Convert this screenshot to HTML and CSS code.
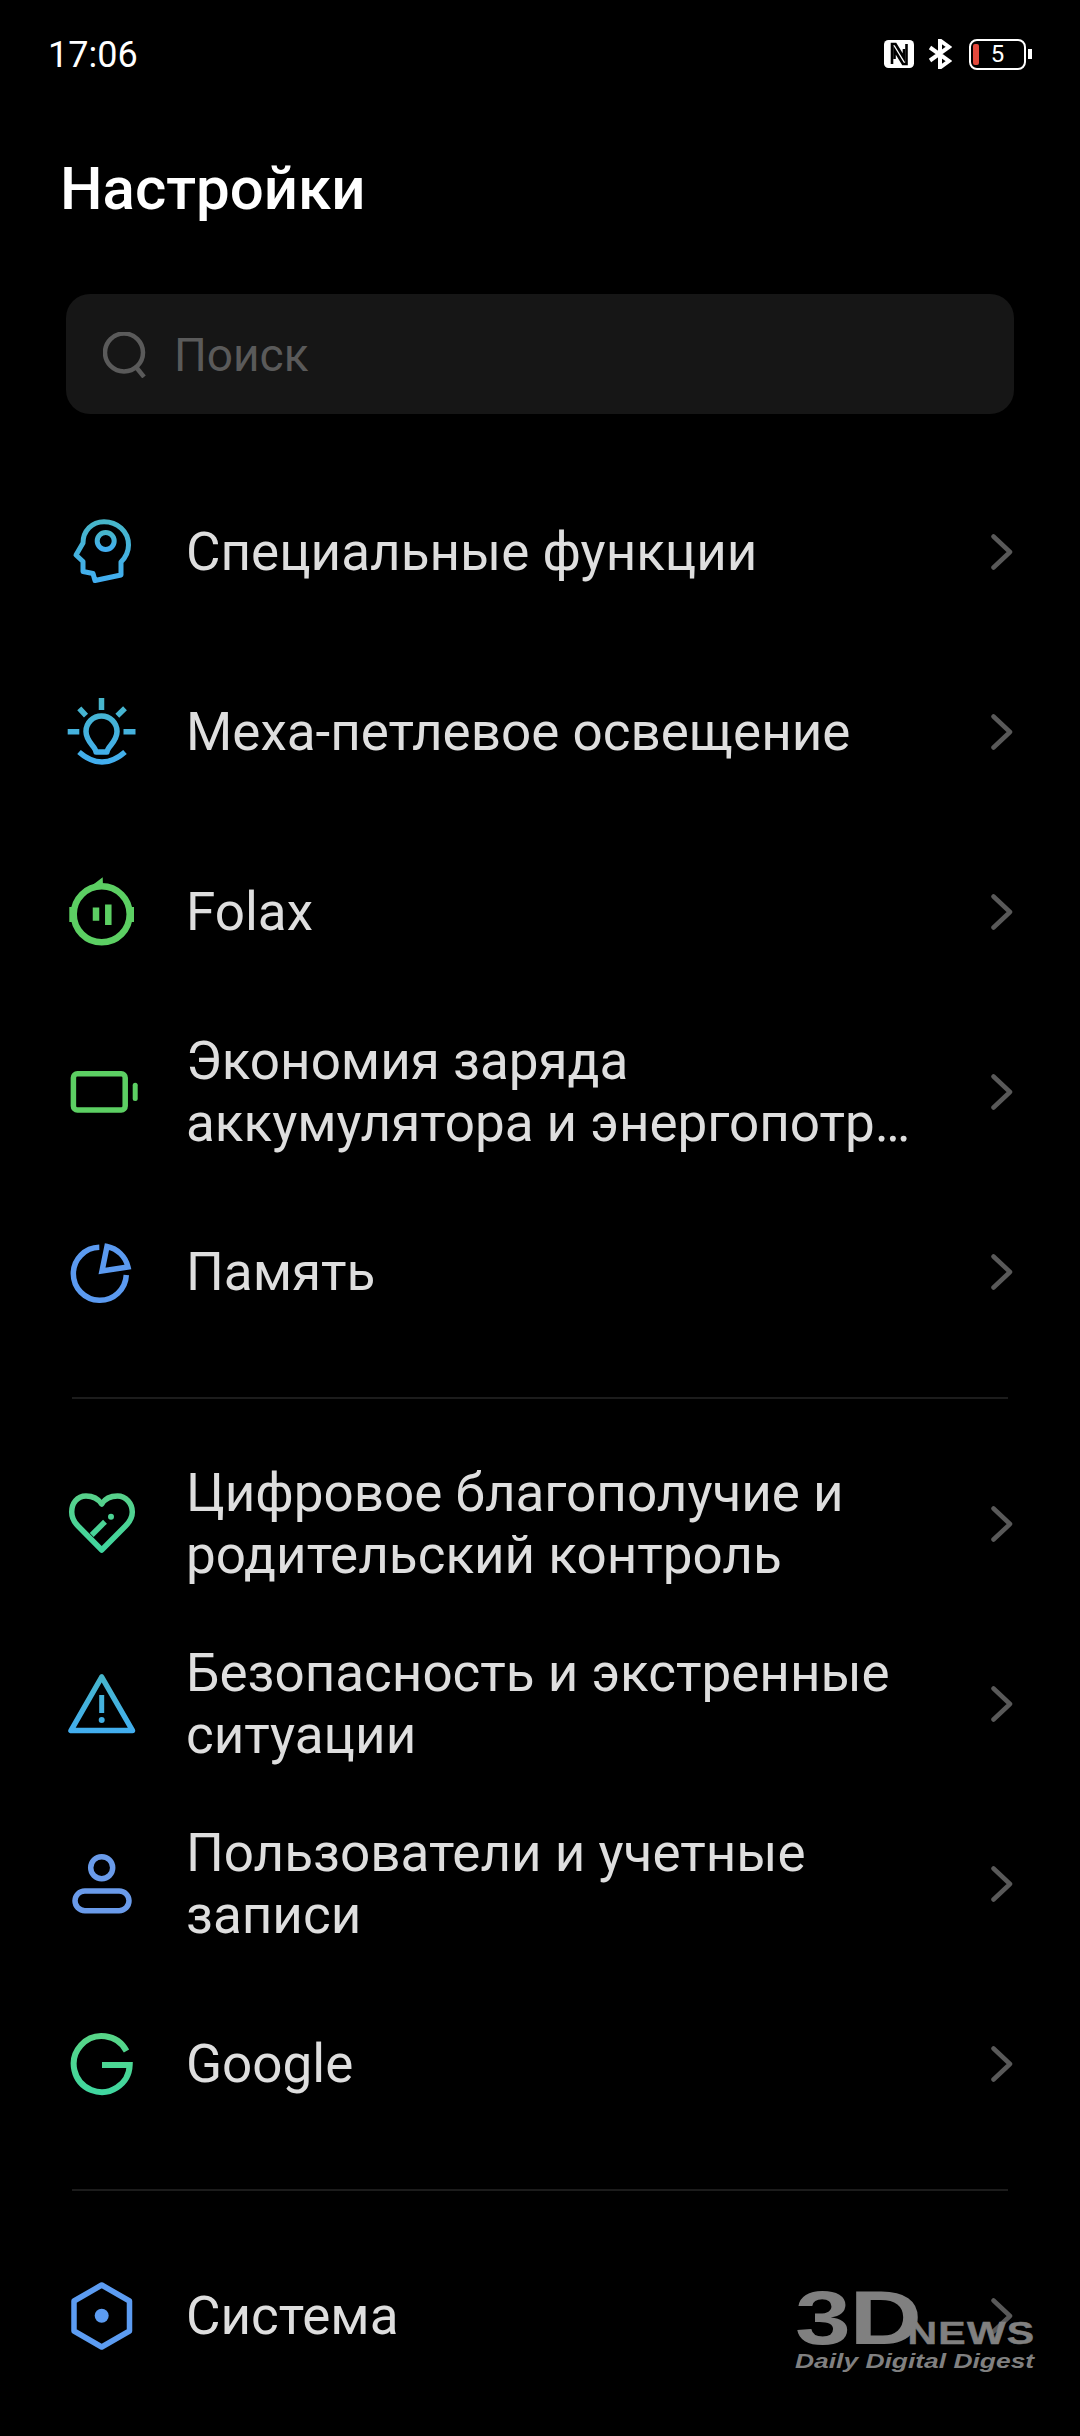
FILE: index.html
```html
<!doctype html>
<html lang="ru">
<head>
	<meta charset="UTF-8">
	<title>Настройки</title>
	<link rel="stylesheet" href="styles.css">
</head>
<body>
	<div class="page">
		<div class="status">
			<span class="time">17:06</span>
			<div class="status-icons">
				<svg class="nfc" viewBox="0 0 30 28"><rect width="30" height="28" rx="4.500" fill="#fff"/><path d="M8 24V4h3.500L20 18V9" fill="none" stroke="#000" stroke-width="2.600"/><path d="M22.500 4v20H19L10.500 10v9" fill="none" stroke="#000" stroke-width="2.600"/></svg>
				<svg class="bt" viewBox="0 0 24 30"><path d="M2 8.500L21 22L12 28.500V1.500L21 8L2 21.500" fill="none" stroke="#fff" stroke-width="4"/></svg>
				<div class="batt"><i class="batt-low"></i><span>5</span></div>
				<i class="batt-nub"></i>
			</div>
		</div>

		<h1 class="title">Настройки</h1>

		<div class="search">
			<svg class="search-icon" viewBox="0 0 44 46"><circle cx="21" cy="20.500" r="19" fill="none" stroke="#5a5a5a" stroke-width="4.500"/><path d="M33 35l8 10" stroke="#5a5a5a" stroke-width="4.500" fill="none"/></svg>
			<span>Поиск</span>
		</div>

		<ul class="list">
			<li class="row">
				<svg class="ico" viewBox="0 0 72 72"><defs><linearGradient id="g1" x1="0" y1="0" x2="0" y2="1"><stop offset="0" stop-color="#47b6c9"/><stop offset="1" stop-color="#42aef0"/></linearGradient></defs><g fill="none" stroke="url(#g1)" stroke-width="5" stroke-linejoin="round"><path d="M55 59V46C59 42 62.500 36 62.500 29C62.500 15 51 5.700 38 5.700C26 5.700 17 15 17 27L10 39L17 45.500V55.500L27 57.500L29 64.500Z"/><circle cx="39.700" cy="25" r="8.500"/></g></svg>
				<span class="label">Специальные функции</span>
				<svg class="arrow" viewBox="0 0 24 36"><path d="M3.500 2.500L20 18L3.500 33.500"/></svg>
			</li>
			<li class="row">
				<svg class="ico" viewBox="0 0 72 72"><defs><linearGradient id="g2" gradientUnits="userSpaceOnUse" x1="0" y1="2" x2="0" y2="68"><stop offset="0" stop-color="#47b6c9"/><stop offset="1" stop-color="#42aef0"/></linearGradient></defs><g fill="none" stroke="url(#g2)" stroke-width="5.500"><path d="M35.500 2v12M1.700 35.700h11.600M57.500 35.700h12M13.300 12.300l6.700 7.400M59 12.300l-7.700 7.400"/><path d="M30 56H41C41.500 50 51 46 51 35.500A15.500 15.500 0 0 0 20 35.500C20 46 29.500 50 30 56Z" stroke-linejoin="round"/><path d="M13 56Q36 76 59 56"/></g></svg>
				<span class="label">Меха-петлевое освещение</span>
				<svg class="arrow" viewBox="0 0 24 36"><path d="M3.500 2.500L20 18L3.500 33.500"/></svg>
			</li>
			<li class="row">
				<svg class="ico" viewBox="0 0 72 72"><g fill="none" stroke="#5ccf63" stroke-width="6.500"><circle cx="35.700" cy="38.300" r="28"/><path d="M30 31.500v13.200M42.300 28.500V49"/></g><path d="M36.700 1.300L24 11h13zM3.300 31h5v15h-5zM63 31h5v15h-5z" fill="#5ccf63"/></svg>
				<span class="label">Folax</span>
				<svg class="arrow" viewBox="0 0 24 36"><path d="M3.500 2.500L20 18L3.500 33.500"/></svg>
			</li>
			<li class="row">
				<svg class="ico" viewBox="0 0 72 72"><rect x="7.400" y="17.800" width="51.800" height="36.200" rx="4" fill="none" stroke="#5ccf63" stroke-width="5.500"/><rect x="66.700" y="26.700" width="5" height="18.300" rx="2.500" fill="#5ccf63"/></svg>
				<span class="label two">Экономия заряда<br>аккумулятора и энергопотр…</span>
				<svg class="arrow" viewBox="0 0 24 36"><path d="M3.500 2.500L20 18L3.500 33.500"/></svg>
			</li>
			<li class="row">
				<svg class="ico" viewBox="0 0 72 72"><g fill="none" stroke="#5b9af0" stroke-width="5.500"><path d="M33.300 11.300A26.500 26.500 0 1 0 60.300 39"/><path d="M36 35L41 10.500A27 27 0 0 1 62 31Z"/></g></svg>
				<span class="label">Память</span>
				<svg class="arrow" viewBox="0 0 24 36"><path d="M3.500 2.500L20 18L3.500 33.500"/></svg>
			</li>
		</ul>

		<div class="line"></div>

		<ul class="list">
			<li class="row">
				<svg class="ico" viewBox="0 0 72 72"><defs><linearGradient id="g3" gradientUnits="userSpaceOnUse" x1="0" y1="6" x2="0" y2="65"><stop offset="0" stop-color="#58d08a"/><stop offset="1" stop-color="#3fd6a0"/></linearGradient></defs><g fill="none" stroke="url(#g3)" stroke-width="5.500" stroke-linejoin="round"><path d="M35.700 16C31 9 24 8 20 8C11 8 5.700 15.500 5.700 24C5.700 31 9 35 12 38L35.700 62L59.500 38C62.500 35 66.300 31 66.300 24C66.300 15.500 60 8 51.500 8C47 8 40 9 35.700 16Z"/><path d="M25.700 47L39 33.700"/></g><circle cx="45" cy="28.700" r="3" fill="#4cd394"/></svg>
				<span class="label two">Цифровое благополучие и<br>родительский контроль</span>
				<svg class="arrow" viewBox="0 0 24 36"><path d="M3.500 2.500L20 18L3.500 33.500"/></svg>
			</li>
			<li class="row">
				<svg class="ico" viewBox="0 0 72 72"><defs><linearGradient id="g4" gradientUnits="userSpaceOnUse" x1="0" y1="5" x2="0" y2="65"><stop offset="0" stop-color="#47b6c9"/><stop offset="1" stop-color="#42aef0"/></linearGradient></defs><path d="M35.700 9L5 62.500H66.500Z" fill="none" stroke="url(#g4)" stroke-width="5.500" stroke-linejoin="round"/><path d="M35.700 27v18" stroke="url(#g4)" stroke-width="5"/><circle cx="35.700" cy="52" r="3" fill="#42aee4"/></svg>
				<span class="label two">Безопасность и экстренные<br>ситуации</span>
				<svg class="arrow" viewBox="0 0 24 36"><path d="M3.500 2.500L20 18L3.500 33.500"/></svg>
			</li>
			<li class="row">
				<svg class="ico" viewBox="0 0 72 72"><g fill="none" stroke="#6a9bea" stroke-width="5.500"><circle cx="35.700" cy="19.700" r="11"/><rect x="9" y="43" width="54" height="19.700" rx="9.850"/></g></svg>
				<span class="label two">Пользователи и учетные<br>записи</span>
				<svg class="arrow" viewBox="0 0 24 36"><path d="M3.500 2.500L20 18L3.500 33.500"/></svg>
			</li>
			<li class="row">
				<svg class="ico" viewBox="0 0 72 72"><defs><linearGradient id="g5" gradientUnits="userSpaceOnUse" x1="0" y1="5" x2="0" y2="67"><stop offset="0" stop-color="#58d586"/><stop offset="1" stop-color="#3fd6a0"/></linearGradient></defs><path d="M60.500 23A28 28 0 1 0 63.700 37H36" fill="none" stroke="url(#g5)" stroke-width="6"/></svg>
				<span class="label">Google</span>
				<svg class="arrow" viewBox="0 0 24 36"><path d="M3.500 2.500L20 18L3.500 33.500"/></svg>
			</li>
		</ul>

		<div class="line"></div>

		<ul class="list">
			<li class="row">
				<svg class="ico" viewBox="0 0 72 72"><path d="M35.700 5L63.500 21V51L35.700 67L8 51V21Z" fill="none" stroke="#5c9cf2" stroke-width="5.500" stroke-linejoin="round"/><circle cx="35.700" cy="35.700" r="7" fill="#5c9cf2"/></svg>
				<span class="label">Система</span>
				<svg class="arrow" viewBox="0 0 24 36"><path d="M3.500 2.500L20 18L3.500 33.500"/></svg>
			</li>
		</ul>

		<div class="mark">
			<div class="mark-top"><span class="mark-3d">3D</span><span class="mark-news">NEWS</span></div>
			<div class="mark-sub">Daily Digital Digest</div>
		</div>
	</div>
</body>
</html>
```

FILE: styles.css
```css
*{
	margin:0;
	padding:0;
	box-sizing:border-box;
}
html,body{
	background:#000;
	height:2436px;
	overflow:hidden;
}
body{
	font-family:Roboto,"Noto Sans",sans-serif;
	color:#dedede;
}
li{
	list-style:none;
}
.page{
	position:relative;
	width:1080px;
	height:2436px;
}

/* status bar */
.status{
	display:flex;
	justify-content:space-between;
	align-items:center;
	height:110px;
	padding:0 48px;
	color:#fff;
}
.time{
	font-size:36px;
}
.status-icons{
	display:flex;
	align-items:center;
	margin-bottom:2px;
}
.nfc{
	width:30px;
	height:28px;
	margin-right:14px;
}
.bt{
	width:24px;
	height:30px;
	margin-right:17px;
}
.batt{
	position:relative;
	display:flex;
	align-items:center;
	justify-content:center;
	width:57px;
	height:31px;
	border:2px solid #fff;
	border-radius:8px;
	font-size:24px;
}
.batt-low{
	position:absolute;
	left:2px;
	top:3px;
	width:6px;
	height:21px;
	background:#e2483c;
	border-radius:2px;
}
.batt-nub{
	width:4px;
	height:10px;
	margin-left:2px;
	background:#fff;
}

/* title and search */
.title{
	height:184px;
	padding:43px 0 0 60px;
	font-size:60px;
	font-weight:500;
	color:#fff;
	line-height:72px;
}
.search{
	display:flex;
	align-items:center;
	gap:27px;
	width:948px;
	height:120px;
	margin-left:66px;
	padding-left:37px;
	padding-top:2px;
	background:#161616;
	border-radius:24px;
	font-size:46px;
	color:#5a5a5a;
}
.search-icon{
	width:44px;
	height:46px;
}

/* rows */
.list:first-of-type{
	margin-top:48px;
}
.row{
	display:flex;
	align-items:center;
	height:180px;
	padding-left:66px;
}
.ico{
	flex:none;
	width:72px;
	height:72px;
	margin-right:48px;
}
.label{
	flex:1;
	font-size:53px;
	line-height:62px;
}
.arrow{
	flex:none;
	width:24px;
	height:36px;
	margin-right:66px;
	fill:none;
	stroke:#595959;
	stroke-width:4.500;
	stroke-linecap:round;
	stroke-linejoin:round;
}
.line{
	height:2px;
	margin:35px 72px 35px 72px;
	background:#1c1c1c;
}

/* watermark */
.mark{
	position:absolute;
	left:795px;
	top:2283px;
	width:180px;
	color:#808080;
	font-family:"Liberation Sans",sans-serif;
	font-weight:700;
	transform:scaleX(1.32);
	transform-origin:left top;
}
.mark-top{
	display:flex;
	align-items:flex-end;
	height:70px;
}
.mark-3d{
	font-size:76px;
	line-height:70px;
	letter-spacing:-1px;
}
.mark-news{
	margin-left:-10px;
	margin-bottom:4px;
	font-size:31px;
	line-height:31px;
	letter-spacing:1px;
	-webkit-text-stroke:0.5px #808080;
}
.mark-sub{
	margin-top:-4px;
	font-size:20px;
	font-style:italic;
	line-height:24px;
	white-space:nowrap;
}
```
